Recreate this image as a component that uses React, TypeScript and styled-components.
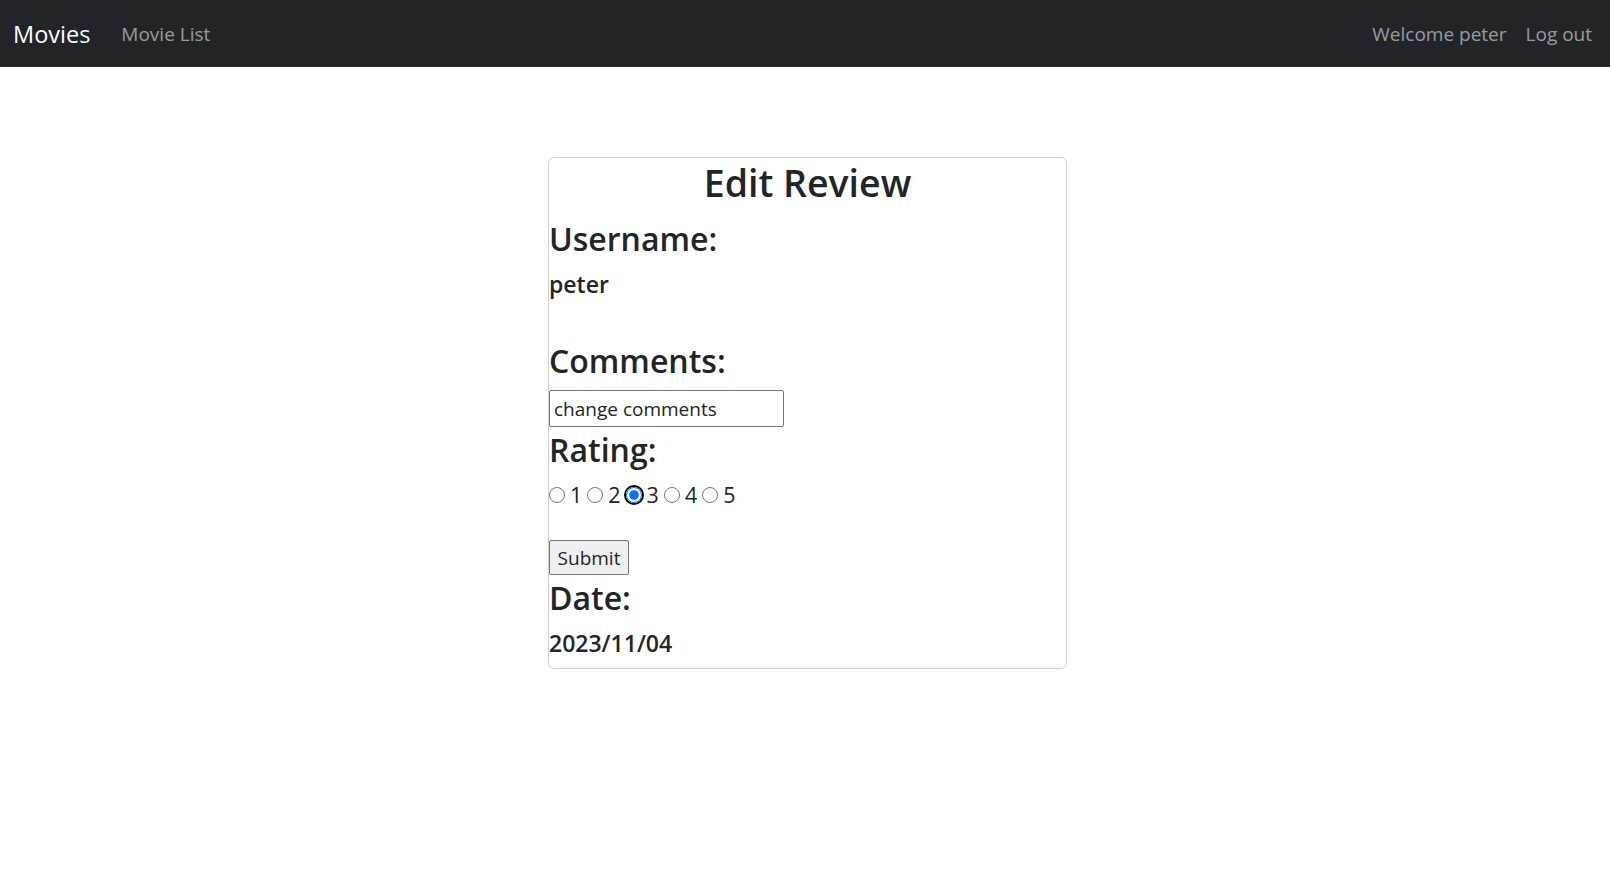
import React from 'react';
import styled, { createGlobalStyle } from 'styled-components';

const GlobalStyle = createGlobalStyle`
  body {
    margin: 0;
    font-family: 'Open Sans', 'Noto Sans', sans-serif;
    color: #212529;
    background: #fff;
  }
`;

const ratings = [1, 2, 3, 4, 5];

const App = () => {
  return (
    <>
      <GlobalStyle />
      <Navbar>
        <NavGroup $gap={31}>
          <Brand>Movies</Brand>
          <NavLink>Movie List</NavLink>
        </NavGroup>
        <NavGroup $gap={19}>
          <NavLink>Welcome peter</NavLink>
          <NavLink>Log out</NavLink>
        </NavGroup>
      </Navbar>

      <Main>
        <Card>
          <Title>Edit Review</Title>
          <Heading $top={13}>Username:</Heading>
          <Value $top={12}>peter</Value>
          <Heading $top={43}>Comments:</Heading>
          <CommentInput defaultValue="change comments" />
          <Heading $top={4}>Rating:</Heading>
          <RadioRow>
            {ratings.map((r) => (
              <RadioItem key={r}>
                <RadioRing $focused={r === 3}>
                  <Radio type="radio" name="rating" defaultChecked={r === 3} />
                </RadioRing>
                <RadioLabel>{r}</RadioLabel>
              </RadioItem>
            ))}
          </RadioRow>
          <SubmitButton type="button">Submit</SubmitButton>
          <Heading $top={4}>Date:</Heading>
          <Value $top={12}>2023/11/04</Value>
        </Card>
      </Main>
    </>
  );
};

const Navbar = styled.nav`
  height: 67px;
  background-color: #212529;
  display: flex;
  align-items: center;
  justify-content: space-between;
  padding: 0 18px 0 13px;
`;

const NavGroup = styled.div<{ $gap: number }>`
  display: flex;
  align-items: center;
  gap: ${(p) => p.$gap}px;
`;

const Brand = styled.a`
  font-size: 23.5px;
  color: #fff;
  cursor: pointer;
`;

const NavLink = styled.a`
  font-size: 19px;
  color: rgba(255, 255, 255, 0.55);
  cursor: pointer;
`;

const Main = styled.main`
  display: flex;
  justify-content: center;
  padding: 90px 0 0 5px;
`;

const Card = styled.div`
  width: 519px;
  box-sizing: border-box;
  border: 1px solid rgba(0, 0, 0, 0.175);
  border-radius: 6px;
  padding: 1px 0 10px;
  display: flex;
  flex-direction: column;
  align-items: flex-start;
`;

const Title = styled.h1`
  align-self: stretch;
  text-align: center;
  margin: 0;
  font-size: 37.5px;
  font-weight: 600;
  line-height: 48px;
`;

const Heading = styled.h2<{ $top: number }>`
  margin: ${(p) => p.$top}px 0 0;
  font-size: 32px;
  font-weight: 600;
  line-height: 38px;
`;

const Value = styled.h4<{ $top: number }>`
  margin: ${(p) => p.$top}px 0 0;
  font-size: 23px;
  font-weight: 600;
  line-height: 29px;
`;

const CommentInput = styled.input`
  margin-top: 10px;
  width: 235px;
  height: 37px;
  box-sizing: border-box;
  border: 1px solid #767676;
  border-radius: 2px;
  padding: 1px 4px;
  font-family: inherit;
  font-size: 19px;
  color: #212529;
`;

const RadioRow = styled.div`
  display: flex;
  align-items: center;
  margin-top: 11px;
  height: 30px;
`;

const RadioItem = styled.label`
  display: flex;
  align-items: center;
`;

const RadioRing = styled.span<{ $focused?: boolean }>`
  display: inline-flex;
  width: 16px;
  height: 16px;
  margin-right: 5px;
  border-radius: 50%;
  box-shadow: ${(p) => (p.$focused ? '0 0 0 2px #000' : 'none')};
`;

const Radio = styled.input`
  width: 16px;
  height: 16px;
  margin: 0;
  outline: none;
`;

const RadioLabel = styled.span`
  font-size: 21.5px;
  line-height: 30px;
  margin-right: 5px;
`;

const SubmitButton = styled.button`
  margin-top: 30px;
  width: 80px;
  height: 35px;
  box-sizing: border-box;
  font-family: inherit;
  font-size: 19px;
  color: #212529;
  background: #efefef;
  border: 1px solid #767676;
  border-radius: 2px;
  padding: 0;
`;

export default App;
